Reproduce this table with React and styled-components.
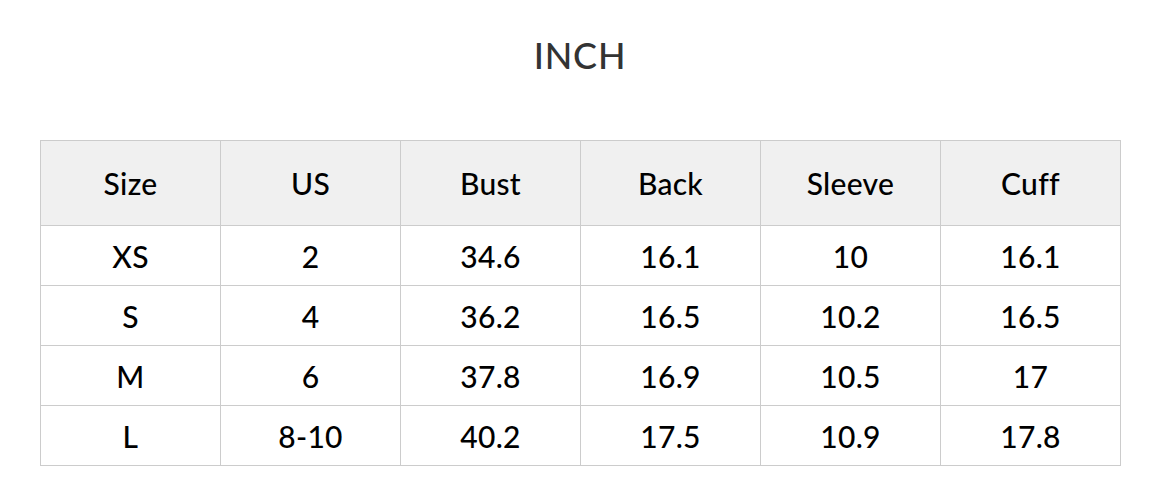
import React from "react";
import styled, { createGlobalStyle } from "styled-components";

const Global = createGlobalStyle`
  html, body { margin: 0; padding: 0; background: #fff; }
  body { font-family: "Lato", "Noto Sans", sans-serif; }
`;

const Page = styled.div`
  width: 1160px;
  padding: 0 40px;
  box-sizing: border-box;
`;

const Title = styled.h2`
  margin: 0;
  height: 140px;
  padding-top: 34px;
  box-sizing: border-box;
  text-align: center;
  font-size: 36px;
  font-weight: 500;
  line-height: 42px;
  color: #333;
  letter-spacing: 0.8px;
`;

const Table = styled.table`
  width: 1081px;
  border-collapse: collapse;
  table-layout: fixed;
`;

const Cell = styled.td`
  border: 1px solid #cccccc;
  height: ${(p) => (p.$head ? "84px" : "59px")};
  padding: 0;
  text-align: center;
  vertical-align: middle;
  font-size: 30px;
  font-weight: 500;
  letter-spacing: 0.3px;
  color: #000;
  background: ${(p) => (p.$head ? "#f0f0f0" : "#fff")};
`;

const head = ["Size", "US", "Bust", "Back", "Sleeve", "Cuff"];
const rows = [
  ["XS", "2", "34.6", "16.1", "10", "16.1"],
  ["S", "4", "36.2", "16.5", "10.2", "16.5"],
  ["M", "6", "37.8", "16.9", "10.5", "17"],
  ["L", "8-10", "40.2", "17.5", "10.9", "17.8"],
];

export default function App() {
  return (
    <Page>
      <Global />
      <Title>INCH</Title>
      <Table>
        <tbody>
          <tr>
            {head.map((h) => (
              <Cell key={h} $head>
                {h}
              </Cell>
            ))}
          </tr>
          {rows.map((r) => (
            <tr key={r[0]}>
              {r.map((c, i) => (
                <Cell key={i}>{c}</Cell>
              ))}
            </tr>
          ))}
        </tbody>
      </Table>
    </Page>
  );
}
